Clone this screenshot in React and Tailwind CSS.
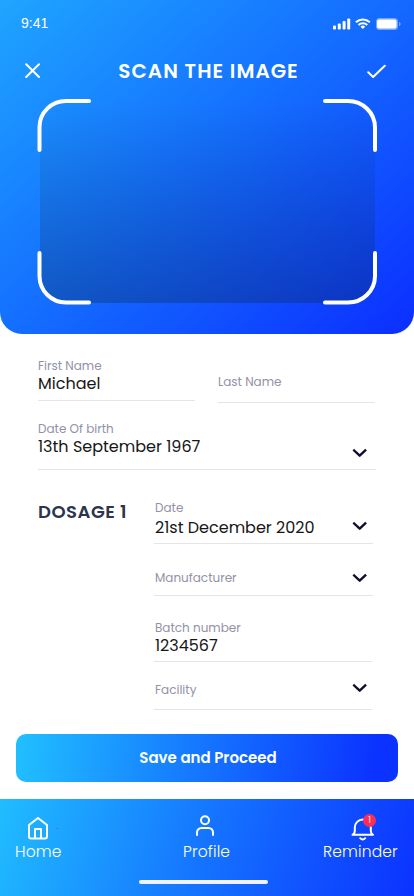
import React from "react";

function Chevron({ className = "" }) {
  return (
    <svg className={`h-[10px] w-4 shrink-0 ${className}`} viewBox="0 0 16 10" fill="none" stroke="#150b2b" strokeWidth="2.4" strokeLinecap="square" strokeLinejoin="round">
      <path d="M2.200 2.500l5.500 5.200L13.200 2.500" />
    </svg>
  );
}

function Label({ className = "", children }) {
  return <div className={`h-4 whitespace-nowrap text-[12px] leading-4 text-[#9292a6] ${className}`}>{children}</div>;
}

function Value({ className = "", children }) {
  return <div className={`h-5 whitespace-nowrap text-[16px] leading-5 text-[#161616] ${className}`}>{children}</div>;
}

function NavLabel({ children }) {
  return <div className="mt-px whitespace-nowrap text-[15.500px] font-light leading-5 tracking-[0.150px]">{children}</div>;
}

function StatusIcons() {
  return (
    <svg className="h-[14px] w-[68px]" viewBox="0 0 68 14" fill="white">
      <rect x="0" y="8.500" width="3" height="4" rx="1" />
      <rect x="4.8" y="6.500" width="3" height="6" rx="1" />
      <rect x="9.6" y="4" width="3" height="8.500" rx="1" />
      <rect x="14.2" y="1.500" width="3" height="11" rx="1" />
      <g fill="none" stroke="white" strokeWidth="2">
        <path d="M22.900 5.200a10 10 0 0 1 13.900 0" />
        <path d="M25.500 8a6.200 6.200 0 0 1 8.700 0" />
      </g>
      <path d="M27.500 9.700a3.400 3.400 0 0 1 4.700 0l-2.350 2.300z" />
      <rect x="43" y="1" width="22" height="12" rx="3.5" opacity=".4" />
      <rect x="44" y="2.500" width="19.500" height="9" rx="2" />
      <path d="M66 5c2.200.6 2.200 3.500 0 4.100z" opacity=".4" />
    </svg>
  );
}

function Header() {
  return (
    <header className="flex h-[334px] flex-col rounded-b-[22px] bg-[linear-gradient(138deg,#1fa5ff_0%,#1573ff_44%,#0b2eff_100%)] text-white">
      <div className="flex h-[46px] items-center justify-between pl-[21px] pr-[13px] pt-[2px]">
        <span className="mb-[2px] font-['Liberation_Sans',sans-serif] text-[14px] leading-4">9:41</span>
        <StatusIcons />
      </div>
      <div className="flex h-[52px] items-center justify-between pb-[3px] pl-[25px] pr-[28px]">
        <svg className="h-[15px] w-[15px]" viewBox="0 0 15 15" fill="none" stroke="white" strokeWidth="2" strokeLinecap="round">
          <path d="M1.200 1.200l12.800 12.800M14 1.200L1.200 14" />
        </svg>
        <h1 className="ml-[10px] mt-px whitespace-nowrap text-[20px] font-semibold leading-6 tracking-[1px]">SCAN THE IMAGE</h1>
        <svg className="mt-px h-[15px] w-[19px]" viewBox="0 0 19 15" fill="none" stroke="white" strokeWidth="2" strokeLinecap="round" strokeLinejoin="round">
          <path d="M1.200 8.200l4.900 4.800L17.800 1.800" />
        </svg>
      </div>
      <div className="mx-[37px] h-[207px]">
        <svg className="h-[207px] w-[340px]" viewBox="0 0 340 207" fill="none">
          <defs>
            <linearGradient id="shade" x1="0" y1="0" x2="0" y2="1">
              <stop offset="0" stopColor="#0b2b50" stopOpacity="0" />
              <stop offset="1" stopColor="#0b2b50" stopOpacity=".34" />
            </linearGradient>
          </defs>
          <path d="M3 29A26 26 0 0 1 29 3H312A26 26 0 0 1 338 29V179A26 26 0 0 1 312 205H29A26 26 0 0 1 3 179Z" fill="url(#shade)" />
          <g stroke="white" strokeWidth="4" strokeLinecap="round">
            <path d="M2.500 52V29A26.500 26 0 0 1 29 3H52" />
            <path d="M288 3h23A27 26.500 0 0 1 338 29.500V52" />
            <path d="M2.500 155v23A26.500 26.500 0 0 0 29 204.500H52" />
            <path d="M288 204.500h23A27 26.500 0 0 0 338 178V155" />
          </g>
        </svg>
      </div>
    </header>
  );
}

function DoseForm() {
  return (
    <section className="flex h-[240px] pl-[38px] pr-[41px]">
      <h2 className="w-[116px] whitespace-nowrap pt-[30px] text-[18px] font-semibold leading-6 tracking-[0.5px] text-[#2b354b]">DOSAGE 1</h2>
      <div className="w-[219px]">
        <div className="flex h-[74px] items-end justify-between border-b border-[#e5e5e7] pl-px pr-[5px]">
          <div className="pb-[5px]">
            <Label>Date</Label>
            <Value className="mt-[2px]">21st December 2020</Value>
          </div>
          <Chevron className="mb-3" />
        </div>
        <div className="flex h-[52px] items-end justify-between border-b border-[#e5e5e7] pl-px pr-[5px]">
          <Label className="mb-[9px]">Manufacturer</Label>
          <Chevron className="mb-3" />
        </div>
        <div className="flex h-[66px] w-[218px] items-end border-b border-[#e5e5e7] pl-px">
          <div className="pb-[5px]">
            <Label>Batch number</Label>
            <Value>1234567</Value>
          </div>
        </div>
        <div className="flex h-12 w-[218px] items-end justify-between border-b border-[#e5e5e7] pl-px pr-1">
          <Label className="mb-[11px]">Facility</Label>
          <Chevron className="mb-4" />
        </div>
      </div>
    </section>
  );
}

function Nav() {
  return (
    <nav className="flex h-[97px] flex-col bg-[linear-gradient(108deg,#20bdff_0%,#1573ff_50%,#0b32ff_100%)] text-white">
      <div className="flex h-[81px] items-start pl-[15px] pt-4">
        <div className="w-[168px]">
          <div className="flex items-start pl-3">
            <svg className="h-[26px] w-[22px]" viewBox="0 0 22 26" fill="none" stroke="white" strokeWidth="2" strokeLinejoin="round">
              <path d="M2 10L11 3l9 7v11.500q0 2-2 2H4q-2 0-2-2Z" />
              <path d="M8 23v-9h6v9" />
            </svg>
            <span className="ml-[7px] mt-[13px] h-px w-[2px] bg-[#6177a5]" />
          </div>
          <NavLabel>Home</NavLabel>
        </div>
        <div className="w-[140px]">
          <svg className="ml-3 h-[26px] w-5" viewBox="0 0 20 26" fill="none" stroke="white" strokeWidth="2" strokeLinecap="round">
            <circle cx="10" cy="5.200" r="4" />
            <path d="M2 20v-2.500a4.500 4.500 0 0 1 4.500-4.500h7a4.500 4.500 0 0 1 4.500 4.500V20" />
          </svg>
          <NavLabel>Profile</NavLabel>
        </div>
        <div className="w-[80px]">
          <div className="relative ml-[27px] h-[26px] w-6">
            <svg className="h-[26px] w-6" viewBox="0 0 24 26" fill="none" stroke="white" strokeWidth="2" strokeLinecap="round" strokeLinejoin="round">
              <path d="M2.500 19.800h20.500q-2.200-1.200-2.200-4V12.500a8 8 0 0 0-16 0v3.300q0 2.800-2.300 4Z" />
              <path d="M10.200 23.200q2.500 2.800 5 0" />
            </svg>
            <span className="absolute left-[13px] top-[-1px] flex h-[13px] w-[13px] items-center justify-center rounded-full bg-[#ff2d55] text-[8px] leading-none">1</span>
          </div>
          <NavLabel>Reminder</NavLabel>
        </div>
      </div>
      <div className="ml-[139px] h-1 w-[129px] rounded-full bg-[#f2f2fc]" />
    </nav>
  );
}

export default function App() {
  return (
    <div className="flex h-[896px] w-[414px] flex-col overflow-hidden bg-white font-['Poppins',Inter,sans-serif]">
      <Header />
      <section className="flex h-[69px] gap-[23px] pl-[38px] pr-[39px]">
        <div className="h-[67px] w-[157px] border-b border-[#e5e5e7] pt-6">
          <Label>First Name</Label>
          <Value>Michael</Value>
        </div>
        <div className="h-[69px] w-[157px] border-b border-[#e5e5e7] pt-10">
          <Label>Last Name</Label>
        </div>
      </section>
      <div className="ml-[38px] flex h-[67px] w-[338px] justify-between border-b border-[#e5e5e7] pr-2 pt-[18px]">
        <div>
          <Label>Date Of birth</Label>
          <Value>13th September 1967</Value>
        </div>
        <Chevron className="mt-[27px]" />
      </div>
      <DoseForm />
      <button className="mx-4 mt-6 h-12 shrink-0 rounded-[10px] bg-[linear-gradient(97deg,#20bdff_2%,#1573ff_50%,#0b32ff_94%)] pl-[2px] text-[15px] font-semibold leading-6 text-white">
        Save and Proceed
      </button>
      <div className="h-[17px] shrink-0" />
      <Nav />
    </div>
  );
}
